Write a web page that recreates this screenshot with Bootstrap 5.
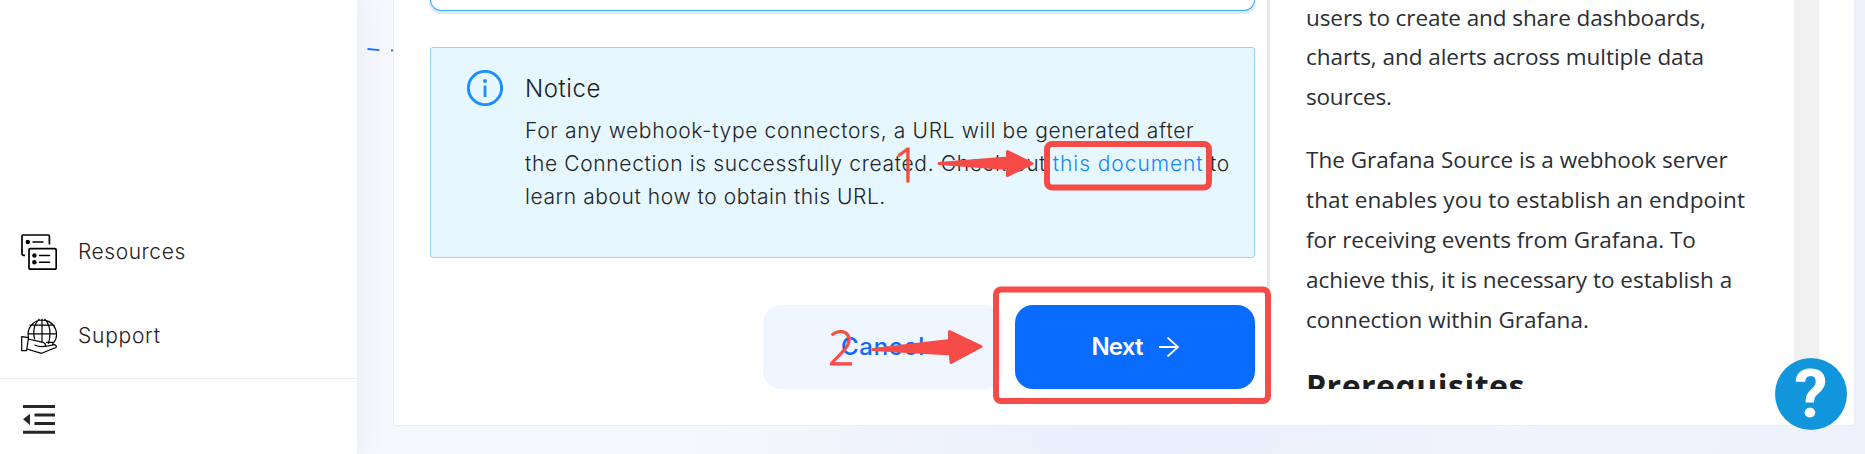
<!DOCTYPE html>
<html lang="en">
<head>
<meta charset="utf-8">
<title>Create connection</title>
<link href="https://cdn.jsdelivr.net/npm/bootstrap@5.3.0/dist/css/bootstrap.min.css" rel="stylesheet">
<style>
body{font-family:Inter,"Liberation Sans",sans-serif;font-weight:300;color:#2b2e33;height:454px;overflow:hidden;background:#fff}
.side{width:357px;box-shadow:0 0 28px rgba(30,40,70,.08);z-index:2}
.side-link{height:84px;padding-left:21px;gap:21px;font-size:21px;color:#222;text-decoration:none}
.side-foot{height:76px;border-top:1px solid #ebebeb;padding:5px 0 0 21px}
.stage{background:linear-gradient(90deg,#f6f8fd 0,#f5f8fd 22%,#e9f0fb 48%,#ecf1fb 68%,#f0f4fc 76%,#ecf1fb 100%);padding-left:36px}
.panel{width:1462px;height:426px;background:#fff;border:1px solid #ebeef4;border-top:0;border-radius:0 0 3px 3px}
.form-col{width:873px;padding-left:36px}
.field{width:825px;height:11px;border:1px solid #40a9ff;border-top:0;border-radius:0 0 17px 17px;box-shadow:0 2px 0 1px rgba(24,144,255,.17)}
.notice{width:825px;height:211px;margin-top:36px;background:#e6f7ff;border:1px solid #91d5ff;border-radius:3px;padding:22px 0 0 36px;gap:22px}
.notice h2{font-size:24px;font-weight:300;line-height:36px;margin:1px 0 7px;letter-spacing:.55px;color:#1c2022}
.notice p{font-size:21px;line-height:33px;margin:0;color:#1e2427;white-space:nowrap}
.notice a{color:#1088ff;text-decoration:none;letter-spacing:.93px}
.actions{width:825px;margin-top:47px;gap:12px}
.action{width:240px;height:84px;border:0;border-radius:18px;font-size:24px;font-weight:500}
.action.cancel{background:#f0f6ff;color:#096cff;letter-spacing:.7px}
.action.next{background:#096cff;color:#fff;font-weight:600;letter-spacing:-.8px}
.doc{height:389px;border-left:3px solid #e8e8e8;width:552px;overflow:hidden}
.doc-text{width:524px;padding-left:36px;margin-top:-2.500px;font:400 22.5px/39.8px "Open Sans","Noto Sans",sans-serif;color:#2b2e33;white-space:nowrap}
.doc-text p{margin:0 0 23.6px}
.doc-text h2{font:700 32px/48px "Open Sans","Noto Sans",sans-serif;letter-spacing:.5px;color:#1c1e21;margin:-1px 0 0}
.track{width:25px;background:#f0f0f0}
.marks{left:0;top:0;z-index:5;pointer-events:none}
.help{left:1775px;top:358px;width:72px;height:72px;background:#1296db;color:#fff;border:0;font:700 67px/72px Roboto,sans-serif;z-index:6;padding:0}
</style>
<script src="https://cdn.jsdelivr.net/npm/bootstrap@5.3.0/dist/js/bootstrap.bundle.min.js"></script>
</head>
<body class="position-relative d-flex">
<nav class="side bg-white d-flex flex-column justify-content-end flex-shrink-0 position-relative">
  <a class="side-link d-flex align-items-center" href="#">
    <svg width="36" height="36" viewBox="0 0 36 36" fill="none" stroke="#000" stroke-width="1.7"><path d="M4 21.3H2.5Q1 21.3 1 19.8V2.3Q1 1 2.3 1H27Q28.4 1 28.4 2.3V10.5"/><rect x="8" y="14.6" width="27.2" height="20.6" rx="1.3"/><path d="M12 8H22M18.500 21.500H28.500M18.500 28.300H28.500" stroke-width="1.500" stroke-linecap="round"/><g fill="#000" stroke="none"><circle cx="6.800" cy="8" r="2.200"/><circle cx="13.400" cy="21.500" r="2.200"/><circle cx="13.400" cy="28.300" r="2.200"/></g></svg>
    <span style="letter-spacing:.55px">Resources</span>
  </a>
  <a class="side-link d-flex align-items-center" href="#">
    <svg width="36" height="36" viewBox="0 0 36 36" fill="none" stroke="#000" stroke-width="1.200" stroke-linejoin="round"><path d="M7.500 19.500A14.200 14.200 0 1 1 32.500 25M21 .8V24.500M8.600 7.200H33.500M6.800 15.800H35.400M25 24.300H33M18.500 .9C13 6 11.800 14 13.700 21.300M23.500 .9C29.500 7 30.200 16 27.400 25.800"/><path d="M.7 18.700L7.500 19.700L5.600 32.700H.7ZM7.400 21L22 24.300Q25 25.500 24.600 28.200Q19 29.300 13.500 27M24.600 28.500L33.500 26.600Q36 27.500 35 29.500L20.500 35.300L5.800 31M31 27.200L32.500 24.500"/></svg>
    <span style="letter-spacing:.75px">Support</span>
  </a>
  <div class="side-foot d-flex align-items-center mt-0">
    <svg width="36" height="36" viewBox="0 0 36 36" fill="#262626"><path d="M2 4H34V7H2ZM13.500 12.500H34V15.500H13.500ZM13.500 21H34V24H13.500ZM2 29.700H34V32.700H2ZM2 18.200L9 12.700V23.900Z"/></svg>
  </div>
</nav>
<main class="stage flex-grow-1">
  <section class="panel d-flex">
    <div class="form-col flex-shrink-0">
      <div class="field"></div>
      <div class="notice d-flex align-items-start">
        <svg class="flex-shrink-0" width="36" height="36" viewBox="0 0 36 36"><circle cx="18" cy="18" r="16.600" fill="none" stroke="#1890ff" stroke-width="2.900"/><circle cx="18" cy="11" r="2" fill="#1890ff"/><path d="M16.600 15.500h2.800v11.500h-2.800z" fill="#1890ff"/></svg>
        <div>
          <h2>Notice</h2>
          <p><span style="letter-spacing:.64px">For any webhook-type connectors, a URL will be generated after</span><br><span style="letter-spacing:.65px">the Connection is successfully created. Check out <a href="#">this document</a> to</span><br><span style="letter-spacing:.57px">learn about how to obtain this URL.</span></p>
        </div>
      </div>
      <div class="actions d-flex justify-content-end">
        <button class="action cancel">Cancel</button>
        <button class="action next d-flex align-items-center justify-content-center gap-3"><span>Next</span><svg width="20" height="20" viewBox="0 0 20 20" fill="none" stroke="#fff" stroke-width="1.800"><path d="M0 10H19M8.500 .5L19 10L8.500 19.500"/></svg></button>
      </div>
    </div>
    <div class="doc d-flex">
      <div class="doc-text flex-shrink-0">
        <p><span style="letter-spacing:-.08px">users to create and share dashboards,</span><br><span style="letter-spacing:-.03px">charts, and alerts across multiple data</span><br><span style="letter-spacing:-.2px">sources.</span></p>
        <p>The Grafana Source is a webhook server<br><span style="letter-spacing:.12px">that enables you to establish an endpoint</span><br>for receiving events from Grafana. To<br>achieve this, it is necessary to establish a<br>connection within Grafana.</p>
        <h2>Prerequisites</h2>
      </div>
      <div class="track"></div>
    </div>
  </section>
</main>
<svg class="marks position-absolute" width="1865" height="454" viewBox="0 0 1865 454">
  <path d="M367.500 49L379.500 50.200M391 50.500H393" stroke="#1a6fff" stroke-width="1.800" fill="none"/>
  <g fill="none" stroke="#f64b46" stroke-width="6"><rect x="1047" y="144" width="162" height="43.500" rx="5"/><rect x="996" y="289.500" width="272" height="111.500" rx="5"/></g>
  <g fill="#f64b46" stroke="#f64b46" stroke-width="3" stroke-linejoin="round"><path d="M939 163.500L1007.500 158V151.500L1032 163.500L1007.500 175.500V168.500Z"/><path d="M873 349.500L949.500 340.500V331.500L981 346.500L951 362.500L950.500 354Z"/></g>
  <g fill="#f64b46" stroke="#f64b46" stroke-width=".9" font-family="Open Sans" font-weight="300" font-size="47"><text x="893.500" y="181.500">1</text><text x="828" y="364.500">2</text></g>
</svg>
<button class="help rounded-circle position-absolute text-center">?</button>
</body>
</html>
